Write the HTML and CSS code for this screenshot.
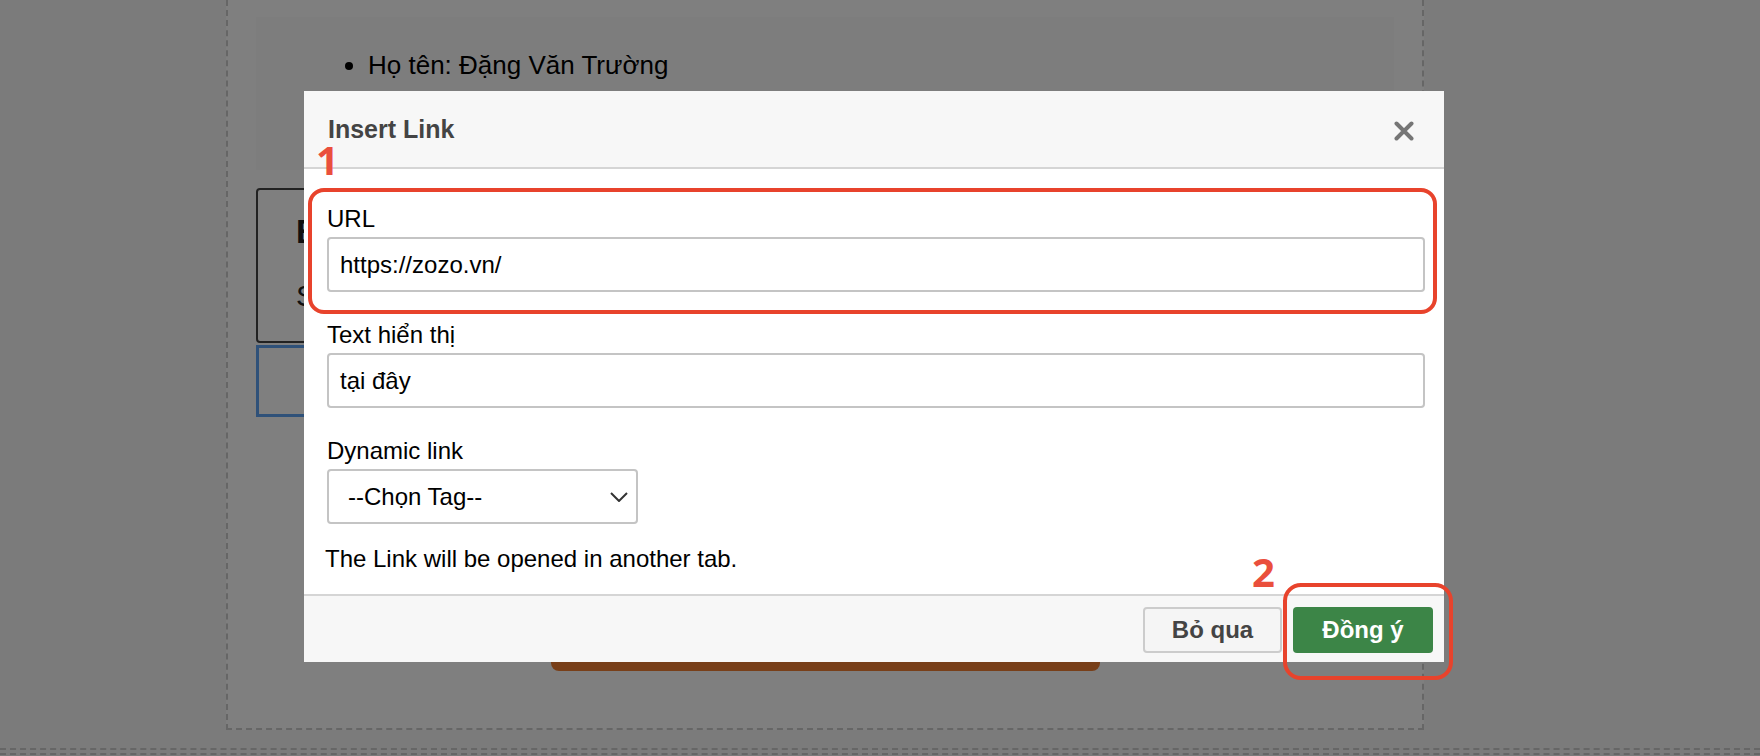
FILE: index.html
```html
<!DOCTYPE html>
<html lang="vi">
<head>
<meta charset="utf-8">
<title>Insert Link</title>
<link rel="stylesheet" href="styles.css">
</head>
<body>
<div class="page">
  <div class="frame">
    <div class="panel">
      <ul class="info">
        <li>Họ tên: Đặng Văn Trường</li>
      </ul>
    </div>
    <div class="choice-box">
      <p class="choice-title">Bấm</p>
      <p class="choice-sub">Số</p>
    </div>
    <div class="blue-box"></div>
    <div class="cta-bar"></div>
  </div>
  <div class="page-rule"></div>
</div>

<div class="overlay"></div>

<div class="modal" role="dialog" aria-label="Insert Link">
  <div class="modal-header">
    <h2 class="modal-title">Insert Link</h2>
    <button class="close-btn" aria-label="Close">
      <svg width="20" height="20" viewBox="0 0 20 20"><path d="M2.5 2.5 L17.5 17.5 M17.5 2.5 L2.5 17.5" stroke="#767676" stroke-width="4" stroke-linecap="round" fill="none"/></svg>
    </button>
  </div>
  <div class="modal-body">
    <div class="form-group">
      <label class="field-label">URL</label>
      <div class="field-input">https://zozo.vn/</div>
    </div>
    <div class="form-group">
      <label class="field-label">Text hiển thị</label>
      <div class="field-input">tại đây</div>
    </div>
    <div class="form-group form-group-last">
      <label class="field-label">Dynamic link</label>
      <div class="field-select">
        <span>--Chọn Tag--</span>
        <svg width="18" height="10" viewBox="0 0 18 10"><path d="M1 1 L9 9 L17 1" stroke="#333" stroke-width="2" fill="none"/></svg>
      </div>
    </div>
    <p class="note">The Link will be opened in another tab.</p>
  </div>
  <div class="modal-footer">
    <button class="btn btn-cancel">Bỏ qua</button>
    <button class="btn btn-ok">Đồng ý</button>
  </div>

  <div class="mark mark-box mark-box-1"></div>
  <div class="mark mark-num mark-num-1">1</div>
  <div class="mark mark-box mark-box-2"></div>
  <div class="mark mark-num mark-num-2">2</div>
</div>
</body>
</html>
```
FILE: styles.css
```css
* { box-sizing: border-box; }

html, body {
  margin: 0;
  padding: 0;
  height: 100%;
  overflow: hidden;
}

body {
  background: #f6f6f6;
  font-family: "Liberation Sans", Arial, Helvetica, sans-serif;
  color: #000;
}

.page {
  width: 1760px;
}

.frame {
  margin-left: 226px;
  width: 1198px;
  height: 730px;
  background: #ffffff;
  border: 2px dashed #cccccc;
  border-top: none;
  padding: 17px 28px 0 28px;
}

.panel {
  height: 153px;
  background: #fbfbfb;
  padding-top: 33px;
}

.info {
  margin: 0;
  padding-left: 112px;
  font-size: 26px;
  line-height: 30px;
}

.choice-box {
  margin-top: 18px;
  width: 560px;
  height: 155px;
  border: 2px solid #444;
  border-radius: 4px;
  background: #fff;
  padding: 22px 0 0 38px;
}

.choice-title {
  margin: 0;
  font-size: 33px;
  font-weight: 700;
  line-height: 40px;
  color: #222;
}

.choice-sub {
  margin: 26px 0 0;
  font-size: 30px;
  line-height: 36px;
  color: #222;
}

.blue-box {
  margin-top: 2px;
  width: 560px;
  height: 72px;
  border: 3px solid #5ea3f2;
}

.cta-bar {
  margin: 204px auto 0;
  width: 549px;
  height: 50px;
  background: #f07e32;
  border-radius: 8px;
}

.page-rule {
  margin-top: 18px;
  height: 7px;
  border-top: 2px dashed #cccccc;
  border-bottom: 2px dashed #cccccc;
}

.overlay {
  position: fixed;
  inset: 0;
  background: rgba(0, 0, 0, 0.5);
}

/* Modal */
.modal {
  position: absolute;
  left: 304px;
  top: 91px;
  width: 1140px;
  background: #fff;
  font-family: "Liberation Sans", Arial, Helvetica, sans-serif;
}

.modal-header {
  height: 78px;
  background: #f7f7f7;
  border-bottom: 2px solid #d5d5d5;
  display: flex;
  align-items: center;
  justify-content: space-between;
  padding: 0 30px 0 24px;
}

.modal-title {
  margin: 0;
  font-size: 25px;
  font-weight: 700;
  color: #444;
  line-height: 30px;
}

.close-btn {
  border: none;
  background: none;
  padding: 0;
  width: 20px;
  height: 20px;
  display: flex;
  margin-top: 4px;
}

.modal-body {
  padding: 36px 19px 21px 23px;
}

.form-group {
  margin-bottom: 29px;
}

.form-group-last {
  margin-bottom: 21px;
}

.field-label {
  display: block;
  font-size: 24px;
  line-height: 28px;
  margin-bottom: 4px;
  color: #000;
}

.field-input {
  height: 55px;
  border: 2px solid #c4c4c4;
  border-radius: 4px;
  padding: 0 11px;
  font-size: 24px;
  display: flex;
  align-items: center;
  color: #000;
}

.field-select {
  width: 311px;
  height: 55px;
  border: 2px solid #c4c4c4;
  border-radius: 4px;
  padding: 0 8px 0 19px;
  font-size: 24px;
  display: flex;
  align-items: center;
  justify-content: space-between;
  color: #000;
}

.note {
  margin: 0;
  font-size: 24px;
  line-height: 28px;
  margin-left: -2px;
}

.modal-footer {
  height: 68px;
  background: #f7f7f7;
  border-top: 2px solid #d5d5d5;
  display: flex;
  justify-content: flex-end;
  align-items: flex-start;
  gap: 11px;
  padding: 11px 11px 0 0;
}

.btn {
  height: 46px;
  font-family: "Liberation Sans", Arial, Helvetica, sans-serif;
  font-size: 24px;
  font-weight: 700;
  border-radius: 4px;
  padding: 0;
  cursor: pointer;
}

.btn-cancel {
  width: 139px;
  background: #f5f5f5;
  border: 2px solid #cccccc;
  color: #444;
}

.btn-ok {
  width: 140px;
  background: #3c8547;
  border: none;
  color: #fff;
}

/* Annotation marks */
.mark {
  position: absolute;
}

.mark-box {
  border: 4px solid #e8432c;
}

.mark-box-1 {
  left: 4px;
  top: 97px;
  width: 1129px;
  height: 126px;
  border-radius: 16px;
}

.mark-box-2 {
  left: 979px;
  top: 492px;
  width: 170px;
  height: 97px;
  border-radius: 18px;
}

.mark-num {
  font-family: "Noto Sans", "Open Sans", sans-serif;
  font-weight: 700;
  font-size: 40px;
  line-height: 30px;
  color: #ea4f3c;
}

.mark-num-1 {
  left: 12px;
  top: 54px;
}

.mark-num-2 {
  left: 948px;
  top: 466px;
}
```
